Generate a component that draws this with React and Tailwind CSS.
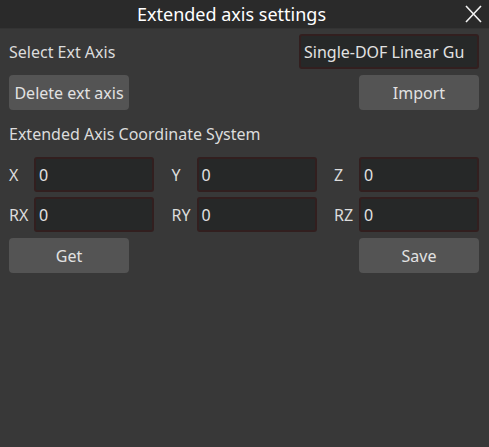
import React from "react"

const font = { fontFamily: '"Noto Sans", "Open Sans", sans-serif' }

const Field = ({ label, value }) => {
    return (
        <div className="flex items-center w-[145px]">
            <span className="w-[25px] text-[16px] text-[#dcdcdc]">{label}</span>
            <div className="w-[120px] h-[35px] bg-[#262828] border-2 border-[#321f1f] rounded-[3px] flex items-center px-[3px] text-[16px] text-[#e2e2e2]">
                {value}
            </div>
        </div>
    )
}

const Btn = ({ children }) => (
    <button className="w-[120px] h-[35px] bg-[#545454] rounded-[4px] text-[16px] text-[#e2e2e2]">{children}</button>
)

const App = () => {
    return (
        <div style={font} className="w-[489px] h-[447px] bg-[#383838] flex flex-col">
            <header className="h-[29px] bg-[#2a2a2a] border-b border-[#333] flex items-center justify-center pr-[26px] relative">
                <h1 className="text-[18px] text-white leading-none">Extended axis settings</h1>
                <svg className="absolute right-[7px] top-[5px]" width="17" height="18" viewBox="0 0 17 18">
                    <path d="M1 1 L16 17 M16 1 L1 17" stroke="#f2f2f2" strokeWidth="1.6" />
                </svg>
            </header>

            <section className="pl-[9px] pr-[10px] flex flex-col">
                <div className="mt-[5px] flex items-center justify-between">
                    <span className="text-[16px] text-[#dcdcdc]">Select Ext Axis</span>
                    <div className="w-[180px] h-[35px] bg-[#262828] border-2 border-[#321f1f] rounded-[3px] flex items-center px-[3px] text-[16px] text-[#e2e2e2] overflow-hidden whitespace-nowrap">
                        Single-DOF Linear Gu
                    </div>
                </div>

                <div className="mt-[6px] flex justify-between">
                    <Btn>Delete ext axis</Btn>
                    <Btn>Import</Btn>
                </div>

                <p className="mt-[14px] h-[20px] leading-[20px] text-[16px] text-[#dcdcdc]">Extended Axis Coordinate System</p>

                <div className="mt-[13px] flex justify-between">
                    <Field label="X" value="0" />
                    <Field label="Y" value="0" />
                    <Field label="Z" value="0" />
                </div>
                <div className="mt-[5px] flex justify-between">
                    <Field label="RX" value="0" />
                    <Field label="RY" value="0" />
                    <Field label="RZ" value="0" />
                </div>

                <div className="mt-[6px] flex justify-between">
                    <Btn>Get</Btn>
                    <Btn>Save</Btn>
                </div>
            </section>
        </div>
    )
}

export default App
